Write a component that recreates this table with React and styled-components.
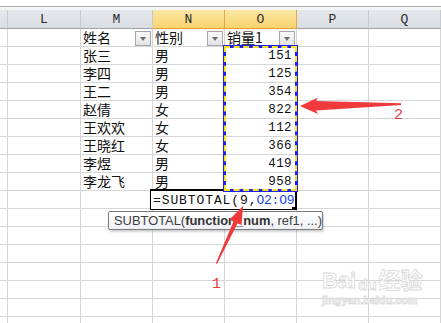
import React from "react";
import styled, { createGlobalStyle } from "styled-components";

const Global = createGlobalStyle`
  body {
    margin: 0;
    background: #fff;
    overflow: hidden;
  }
`;

const MONO = `"Liberation Mono", "Courier New", "DejaVu Sans Mono", monospace`;

const COLS = ["", "L", "M", "N", "O", "P", "Q"];

const rows = [
  { name: "张三", sex: "男", qty: 151 },
  { name: "李四", sex: "男", qty: 125 },
  { name: "王二", sex: "男", qty: 354 },
  { name: "赵倩", sex: "女", qty: 822 },
  { name: "王欢欢", sex: "女", qty: 112 },
  { name: "王晓红", sex: "女", qty: 366 },
  { name: "李煜", sex: "男", qty: 419 },
  { name: "李龙飞", sex: "男", qty: 958 },
];

const App = () => {
  const empty = (key) => COLS.map((c, i) => <Cell key={key + "-" + i} />);

  return (
    <Page>
      <Global />
      <TopBar />
      <TopGap />
      <Stack>
        <Sheet>
          {COLS.map((c, i) => (
            <HeadCell key={"h" + i} $active={c === "N" || c === "O"}>
              {c}
            </HeadCell>
          ))}

          <Cell />
          <Cell />
          <Cell>
            <Cjk>姓名</Cjk>
            <Drop />
          </Cell>
          <Cell>
            <Cjk>性别</Cjk>
            <Drop />
          </Cell>
          <Cell>
            <Cjk>销量1</Cjk>
            <Drop />
          </Cell>
          <Cell />
          <Cell />

          {rows.map((r, idx) => (
            <React.Fragment key={"r" + idx}>
              <Cell />
              <Cell />
              <Cell>
                <Cjk>{r.name}</Cjk>
              </Cell>
              <Cell>
                <Cjk>{r.sex}</Cjk>
              </Cell>
              <Cell $num>{r.qty}</Cell>
              <Cell />
              <Cell />
            </React.Fragment>
          ))}

          {Array.from({ length: 8 }).map((_, k) => (
            <React.Fragment key={"e" + k}>{empty("e" + k)}</React.Fragment>
          ))}
        </Sheet>

        <Marks>
          <Formula>
            <span>=SUBTOTAL(9,</span>
            <Ref>O2:O9</Ref>
          </Formula>
          <Selection />
        </Marks>
      </Stack>

      <Tooltip>
        SUBTOTAL(<b>function_num</b>, ref1, ...)
      </Tooltip>

      <Watermark>
        <WmTop>
          Bai<Paw>du</Paw>经验
        </WmTop>
        <WmUrl>jingyan.baidu.com</WmUrl>
      </Watermark>

      <Arrows viewBox="0 0 441 323">
        <polygon points="216,263 233.5,221.5 229.5,219.5 243,206 241.5,225 237.5,223.5 217,264" />
        <polygon points="300,106 318,97.5 316,101 401,103.2 401,105 316,110.5 318,114" />
      </Arrows>
      <Label $x={212} $y={276}>1</Label>
      <Label $x={394} $y={107}>2</Label>
    </Page>
  );
};

export default App;

const Page = styled.div`
  position: relative;
  width: 441px;
  height: 323px;
  overflow: hidden;
  background: #fff;
  font-family: ${MONO};
`;

const TopBar = styled.div`
  height: 6px;
  border-bottom: 1px solid #a9abae;
`;

const TopGap = styled.div`
  height: 3px;
  background: #f3f4f6;
`;

const Stack = styled.div`
  display: grid;
  & > * {
    grid-area: 1 / 1;
  }
`;

const Sheet = styled.div`
  display: grid;
  grid-template-columns: 8px 73px repeat(5, 72px);
  grid-template-rows: 19px repeat(17, 18px);
`;

const Marks = styled(Sheet)`
  pointer-events: none;
`;

const HeadCell = styled.div`
  box-sizing: border-box;
  display: flex;
  align-items: center;
  justify-content: center;
  font-family: ${MONO};
  font-size: 13px;
  color: #2b2b2b;
  border-right: 1px solid ${(p) => (p.$active ? "#e2a64c" : "#c6cad0")};
  border-bottom: 1px solid ${(p) => (p.$active ? "#f29b3a" : "#9ea3aa")};
  background: ${(p) =>
    p.$active
      ? "linear-gradient(#fbe6a4, #f8d46e)"
      : "linear-gradient(#e4e7eb, #dadee3)"};
`;

const Cell = styled.div`
  box-sizing: border-box;
  position: relative;
  display: flex;
  align-items: center;
  justify-content: ${(p) => (p.$num ? "flex-end" : "flex-start")};
  padding: ${(p) => (p.$num ? "0 4px 0 0" : "0 0 0 2px")};
  border-right: 1px solid #d6d6d6;
  border-bottom: 1px solid #d6d6d6;
  font-family: ${MONO};
  font-size: 12.5px;
  letter-spacing: 0.4px;
  color: #111;
  white-space: nowrap;
`;

const Cjk = styled.span`
  font-family: "Noto Sans CJK SC", ${MONO};
  font-size: 14px;
  line-height: 17px;
  letter-spacing: 0;
`;

const Drop = styled.span`
  position: absolute;
  right: 1px;
  top: 2px;
  width: 14px;
  height: 13px;
  border: 1px solid #a3a6aa;
  background: linear-gradient(#fafafa, #e2e3e5);
  &::after {
    content: "";
    position: absolute;
    left: 4px;
    top: 5px;
    border-left: 3.5px solid transparent;
    border-right: 3.5px solid transparent;
    border-top: 4px solid #6a6a6a;
  }
`;

const Formula = styled.div`
  grid-column: 4 / 6;
  grid-row: 11;
  position: relative;
  box-sizing: border-box;
  margin: -2px 0 -1px -3px;
  display: flex;
  align-items: center;
  padding-left: 2px;
  background: #fff;
  border: 1px solid #000;
  border-top: 2px solid #000;
  border-right: 2px solid #000;
  font-family: ${MONO};
  font-size: 13px;
  letter-spacing: 0.9px;
  color: #111;
  white-space: pre;
  &::after {
    content: "";
    position: absolute;
    right: -1px;
    bottom: -1px;
    width: 4px;
    height: 3px;
    background: #000;
  }
`;

const Ref = styled.span`
  margin-left: -1px;
  font-size: 13px;
  letter-spacing: -0.2px;
  color: #1a47e6;
`;

const Selection = styled.div`
  grid-column: 5;
  grid-row: 3 / 11;
  position: relative;
  margin: -2px -1px -1px -2px;
  border: 3px solid #1f1ff2;
  &::after {
    content: "";
    position: absolute;
    inset: -2px;
    border: 2px dashed #f4e51c;
  }
`;

const Tooltip = styled.div`
  position: absolute;
  left: 108px;
  top: 211px;
  width: 215px;
  height: 19px;
  box-sizing: border-box;
  display: flex;
  align-items: center;
  padding-left: 5px;
  border: 1px solid #7a7a7a;
  border-radius: 2px;
  background: linear-gradient(#ffffff, #eef0f4);
  box-shadow: 1px 2px 2px rgba(0, 0, 0, 0.18);
  font-family: "Liberation Sans", Arial, sans-serif;
  font-size: 12.9px;
  color: #3d3d3d;
  white-space: nowrap;
  b {
    color: #333;
  }
`;

const Arrows = styled.svg`
  position: absolute;
  left: 0;
  top: 0;
  width: 441px;
  height: 323px;
  pointer-events: none;
  polygon {
    fill: #f0393a;
  }
`;

const Label = styled.span`
  position: absolute;
  left: ${(p) => p.$x}px;
  top: ${(p) => p.$y}px;
  font-family: ${MONO};
  font-size: 15px;
  color: #ec3b3b;
`;

const Watermark = styled.div`
  position: absolute;
  left: 322px;
  top: 268px;
  display: flex;
  flex-direction: column;
  color: rgba(255, 255, 255, 0.9);
  -webkit-text-stroke: 0.8px #d9d9d9;
  font-family: "Liberation Sans", Arial, "Noto Sans CJK SC", sans-serif;
`;

const WmTop = styled.div`
  display: flex;
  align-items: flex-end;
  font-size: 22px;
  font-weight: 700;
  line-height: 26px;
`;

const Paw = styled.span`
  font-size: 15px;
  line-height: 18px;
  margin: 0 2px;
`;

const WmUrl = styled.div`
  font-size: 10.5px;
  font-weight: 700;
  letter-spacing: 0.2px;
`;
